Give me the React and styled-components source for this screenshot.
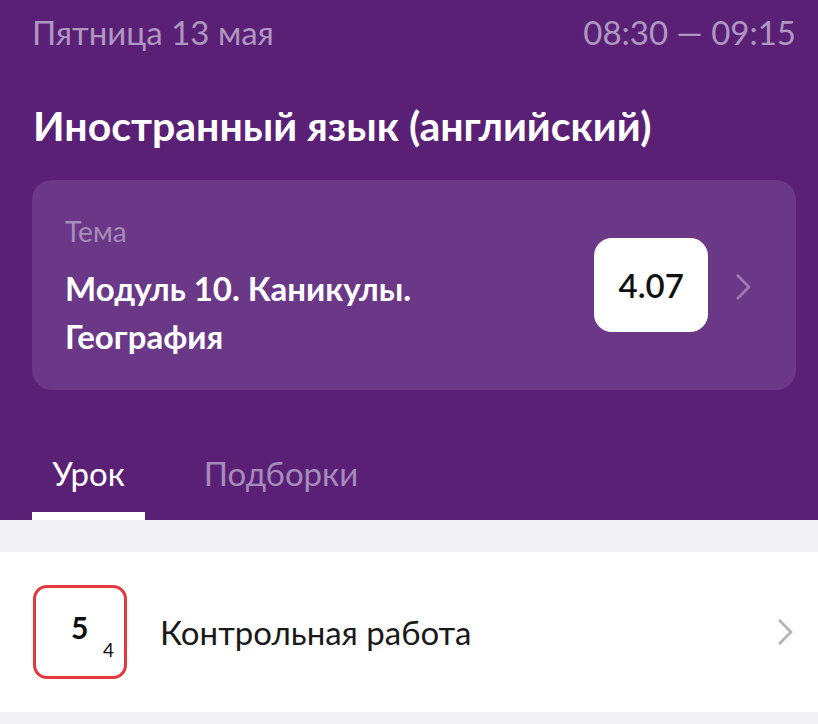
import React from 'react'
import styled, { createGlobalStyle } from 'styled-components'

const GlobalStyle = createGlobalStyle`
    html, body {
        margin: 0;
        padding: 0;
        background: #f2f1f6;
        font-family: Lato, 'Noto Sans', sans-serif;
    }
`

const Page = styled.div`
    width: 818px;
    height: 724px;
    overflow: hidden;
    background: #f2f1f6;
`

const Header = styled.div`
    background: #5a2076;
    padding: 0 22px 0 32px;
`

const TopRow = styled.div`
    display: flex;
    justify-content: space-between;
    align-items: center;
    height: 64px;
    font-size: 33px;
    color: #ae97c0;
`

const Title = styled.h1`
    margin: 0;
    padding: 38px 0 0 1px;
    height: 78px;
    font-size: 41px;
    font-weight: 700;
    color: #fff;
    line-height: 48px;
`

const TopicCard = styled.div`
    display: flex;
    align-items: center;
    height: 210px;
    box-sizing: border-box;
    padding: 4px 44px 0 33px;
    border-radius: 20px;
    background: #6b3787;
`

const TopicText = styled.div`
    flex: 1;
`

const TopicLabel = styled.div`
    font-size: 28px;
    color: #a68cba;
    line-height: 34px;
    margin-bottom: 16px;
`

const TopicName = styled.div`
    font-size: 33px;
    font-weight: 700;
    color: #fff;
    line-height: 48px;
`

const Grade = styled.div`
    display: flex;
    align-items: center;
    justify-content: center;
    width: 114px;
    height: 94px;
    margin-top: -4px;
    border-radius: 18px;
    background: #fff;
    font-size: 33px;
    font-weight: 600;
    color: #111;
    margin-right: 27px;
`

const Tabs = styled.div`
    display: flex;
    margin-top: 42px;
    height: 88px;
`

const Tab = styled.div`
    position: relative;
    width: ${(p) => p.width}px;
    text-align: center;
    padding-top: 21px;
    font-size: 33px;
    color: ${(p) => (p.active ? '#fff' : '#a68cba')};
    &::after {
        content: '';
        display: ${(p) => (p.active ? 'block' : 'none')};
        position: absolute;
        left: 0;
        right: 0;
        bottom: 0;
        height: 8px;
        background: #fff;
    }
`

const Gap = styled.div`
    height: 32px;
`

const Row = styled.div`
    display: flex;
    align-items: center;
    height: 160px;
    background: #fff;
    padding: 0 24px 0 33px;
`

const MarkBox = styled.div`
    position: relative;
    width: 94px;
    height: 94px;
    box-sizing: border-box;
    border: 3px solid #e03a3e;
    border-radius: 14px;
`

const MarkMain = styled.span`
    position: absolute;
    left: 35px;
    top: 21px;
    font-size: 30px;
    font-weight: 700;
    color: #111;
`

const MarkSub = styled.span`
    position: absolute;
    left: 67px;
    top: 50px;
    font-size: 19px;
    color: #111;
`

const RowTitle = styled.div`
    flex: 1;
    margin-left: 33px;
    font-size: 33px;
    color: #1a1a1a;
`

const Chevron = ({ color, size = 28 }) => (
    <svg width={size * 0.6} height={size} viewBox="0 0 12 20" fill="none">
        <path
            d="M2 2 L10 10 L2 18"
            stroke={color}
            strokeWidth="2"
            strokeLinecap="round"
            strokeLinejoin="round"
        />
    </svg>
)

const App = () => {
    return (
        <Page>
            <GlobalStyle />
            <Header>
                <TopRow>
                    <span>Пятница 13 мая</span>
                    <span>08:30 — 09:15</span>
                </TopRow>
                <Title>Иностранный язык (английский)</Title>
                <TopicCard>
                    <TopicText>
                        <TopicLabel>Тема</TopicLabel>
                        <TopicName>
                            Модуль 10. Каникулы.
                            <br />
                            География
                        </TopicName>
                    </TopicText>
                    <Grade>4.07</Grade>
                    <Chevron color="#9a7ab0" />
                </TopicCard>
                <Tabs>
                    <Tab active width={113}>Урок</Tab>
                    <Tab width={272}>Подборки</Tab>
                </Tabs>
            </Header>
            <Gap />
            <Row>
                <MarkBox>
                    <MarkMain>5</MarkMain>
                    <MarkSub>4</MarkSub>
                </MarkBox>
                <RowTitle>Контрольная работа</RowTitle>
                <Chevron color="#b5b5b5" />
            </Row>
        </Page>
    )
}

export default App
